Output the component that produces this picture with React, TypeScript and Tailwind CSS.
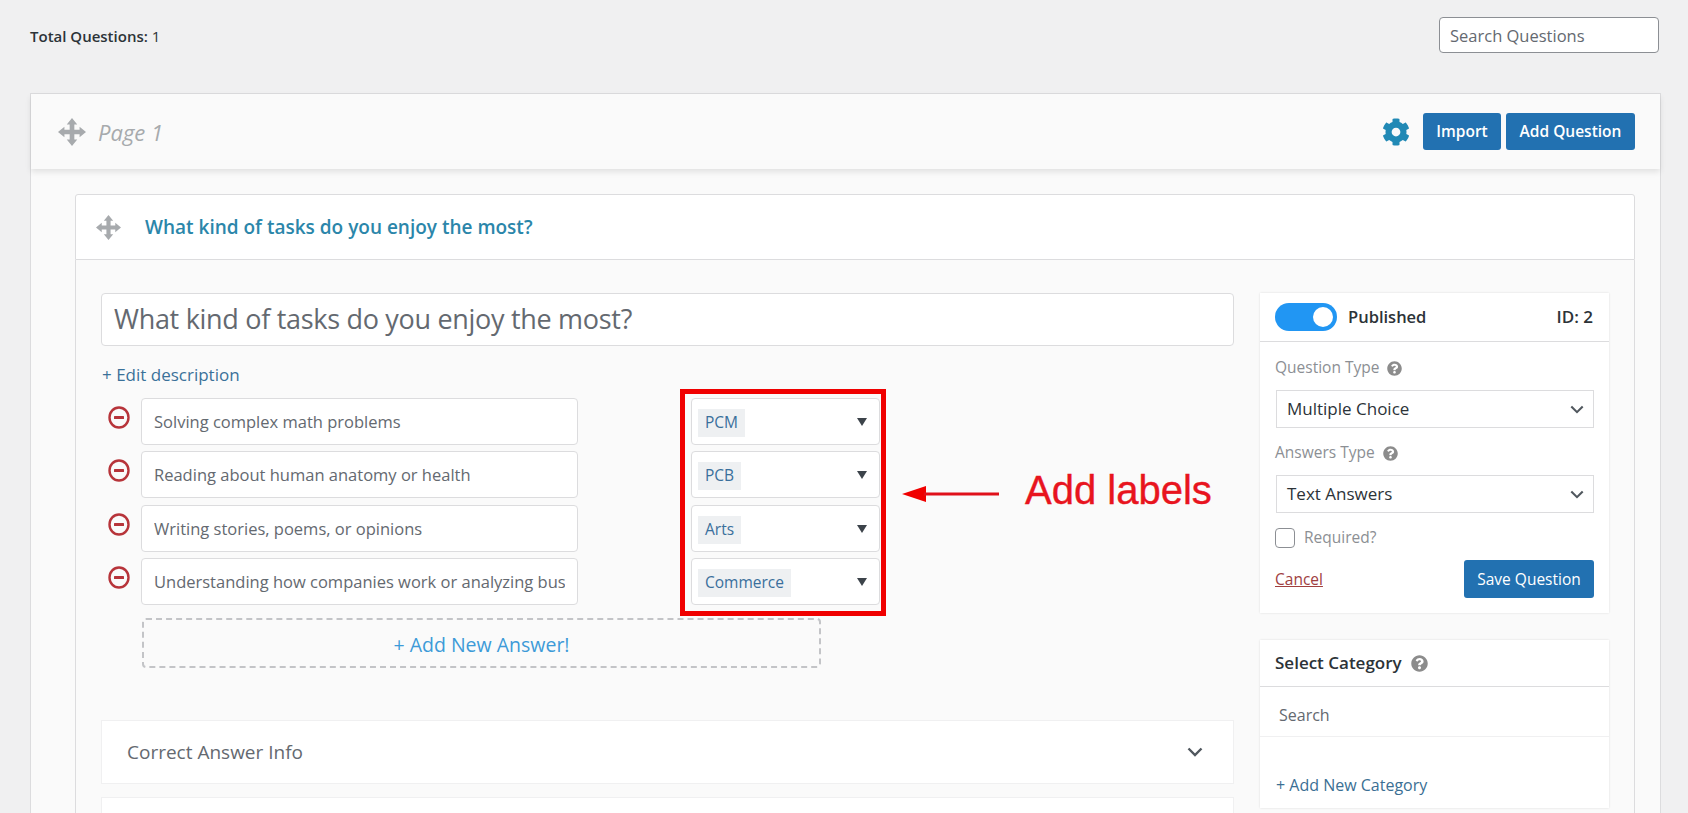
import React from "react";
import { FaCog, FaQuestionCircle } from "react-icons/fa";

function Move({ className }: { className: string }) {
  return (
    <svg viewBox="0 0 24 24" className={className} fill="#a7aaad">
      <path d="M12 0l4.5 5.5H14V10h4.5V7.5L24 12l-5.5 4.5V14H14v4.5h2.5L12 24l-4.5-5.5H10V14H5.5v2.5L0 12l5.5-4.5V10H10V5.5H7.5z" />
    </svg>
  );
}

function Minus() {
  return (
    <svg viewBox="0 0 22 23" className="w-[22px] h-[23px] shrink-0" fill="none">
      <ellipse cx="11" cy="11.5" rx="9.5" ry="10" stroke="#b7343a" strokeWidth="2.4" />
      <rect x="6" y="10" width="10" height="3" rx="0.5" fill="#b7343a" />
    </svg>
  );
}

function Chevron({ className }: { className: string }) {
  return (
    <svg viewBox="0 0 16 10" className={className} fill="none">
      <path d="M1.5 1.5L8 8l6.5-6.5" stroke="#50575e" strokeWidth="2.4" />
    </svg>
  );
}

function AnswerRow({ text, tag, extra }: { text: string; tag: string; extra: string }) {
  return (
    <div className={`flex items-start pl-[7px] ${extra}`}>
      <div className="mt-[8px]">
        <Minus />
      </div>
      <div className="ml-[11px] w-[437px] h-[47px] bg-white border border-[#dcdcde] rounded-[4px] pl-[12px] pr-[12px] flex items-center">
        <div className="overflow-hidden whitespace-nowrap text-[#646970] text-[16.5px] leading-[26px] pt-[1px]">{text}</div>
      </div>
      <div className="ml-[113px] w-[189px] h-[47px] bg-white border border-[#dcdcde] rounded-[4px] pl-[6px] pr-[12px] flex items-center justify-between">
        <span className="mt-[2px] bg-[#eef0f2] text-[#3a6f9c] text-[15.5px] h-[28px] px-[7px] flex items-center">{tag}</span>
        <svg viewBox="0 0 10 8" className="w-[10px] h-[8px]">
          <polygon points="0,0 10,0 5,8" fill="#3c434a" />
        </svg>
      </div>
    </div>
  );
}

function SelectBox({ text }: { text: string }) {
  return (
    <div className="ml-px w-[318px] h-[38px] bg-white border border-[#dcdcde] pl-[10px] pr-[9px] flex items-center justify-between">
      <span className="text-[#2c3338] text-[17px]">{text}</span>
      <Chevron className="w-[14px] h-[9px]" />
    </div>
  );
}

export default function App() {
  return (
    <div className="h-[813px] overflow-hidden bg-[#f0f0f1] pl-[30px] font-['Open_Sans',sans-serif]">
      <div className="w-[1629px] h-[93px] pt-[17px] flex justify-between items-start">
        <div className="text-[15px] text-[#2c3338] mt-[8px]">
          <span className="font-semibold">Total Questions:</span> 1
        </div>
        <div className="w-[220px] h-[36px] bg-white border border-[#8c8f94] rounded-[4px] pl-[10px] pt-[3px] flex items-center text-[#646970] text-[16.5px]">
          Search Questions
        </div>
      </div>

      <div className="w-[1631px] h-[800px] bg-[#fafafa] border border-[#dcdcde]">
        <div className="h-[75px] bg-[#fafafa] shadow-[0_3px_6px_rgba(0,0,0,0.1)] flex items-center pl-[27px] pr-[25px]">
          <Move className="w-[28px] h-[28px]" />
          <span className="ml-[12px] pt-[2px] text-[22px] italic text-[#a7aaad]">Page 1</span>
          <FaCog className="ml-auto w-[28px] h-[28px] text-[#2189b5]" />
          <div className="ml-[13px] w-[78px] h-[37px] rounded-[3px] bg-[#2271b1] text-white text-[15.5px] font-semibold flex items-center justify-center">
            Import
          </div>
          <div className="ml-[5px] w-[129px] h-[37px] rounded-[3px] bg-[#2271b1] text-white text-[15.5px] font-semibold flex items-center justify-center">
            Add Question
          </div>
        </div>

        <div className="ml-[44px] mt-[25px] w-[1560px] h-[66px] bg-white border border-[#dcdcde] rounded-t-[3px] flex items-center pl-[20px]">
          <Move className="w-[25px] h-[25px]" />
          <span className="ml-[24px] pt-[1px] text-[#2b86aa] text-[19px] font-semibold">What kind of tasks do you enjoy the most?</span>
        </div>

        <div className="ml-[44px] w-[1560px] h-[600px] border-x border-[#dcdcde] bg-[#fafafa] pl-[25px] pt-[33px] flex gap-[26px]">
          <div className="w-[1133px]">
            <div className="h-[53px] bg-white border border-[#dcdcde] rounded-[4px] pl-[12px] flex items-center text-[#646970] text-[27px] tracking-[-0.3px]">
              What kind of tasks do you enjoy the most?
            </div>
            <div className="mt-[17px] h-[24px] pl-[1px] flex items-center text-[#3a7199] text-[17px]">+ Edit description</div>

            <div className="relative mt-[11px]">
              <AnswerRow text="Solving complex math problems" tag="PCM" extra="" />
              <AnswerRow text="Reading about human anatomy or health" tag="PCB" extra="mt-[6px]" />
              <AnswerRow text="Writing stories, poems, or opinions" tag="Arts" extra="mt-[7px]" />
              <AnswerRow text="Understanding how companies work or analyzing business trends" tag="Commerce" extra="mt-[6px]" />

              <div className="absolute left-[579px] -top-[9px] w-[206px] h-[227px] border-[5px] border-[#f00000]" />
              <svg viewBox="0 0 97 16" className="absolute left-[801px] top-[88px] w-[97px] h-[16px]">
                <polygon points="0,8 24,0 24,16" fill="#f00000" />
                <rect x="22" y="6.5" width="75" height="3" fill="#e0101a" />
              </svg>
              <div className="absolute left-[924px] top-[72px] text-[40px] leading-[40px] text-[#e8141e] [-webkit-text-stroke:0.4px_#e8141e] font-['Liberation_Sans',sans-serif] whitespace-nowrap">
                Add labels
              </div>
            </div>

            <div className="ml-[41px] mt-[13px] w-[679px] h-[50px] border-2 border-dashed border-[#c3c4c7] rounded-[4px] pt-[4px] flex items-center justify-center text-[#3d9ad8] text-[19.5px]">
              + Add New Answer!
            </div>

            <div className="mt-[52px] h-[64px] bg-white border border-[#f0f0f1] flex items-center justify-between pl-[25px] pr-[30px]">
              <span className="text-[#646970] text-[19px]">Correct Answer Info</span>
              <Chevron className="w-[16px] h-[10px]" />
            </div>
            <div className="mt-[13px] h-[64px] bg-white border border-[#f0f0f1]" />
          </div>

          <div className="w-[349px]">
            <div className="h-[320px] bg-white shadow-[0_0_2px_rgba(0,0,0,0.12)]">
              <div className="h-[49px] border-b border-[#dcdcde] pl-[15px] pr-[16px] flex items-center">
                <div className="w-[62px] h-[28px] rounded-full bg-[#2196f3] flex items-center justify-end pr-[4px]">
                  <div className="w-[20px] h-[20px] rounded-full bg-white" />
                </div>
                <span className="ml-[11px] text-[16.5px] font-semibold text-[#2c3338]">Published</span>
                <span className="ml-auto text-[17px] font-semibold text-[#2c3338]">ID: 2</span>
              </div>
              <div className="pl-[15px] pr-[14px]">
                <div className="mt-[14px] h-[24px] flex items-center text-[#8c8f94] text-[15.5px]">
                  Question Type
                  <FaQuestionCircle className="ml-[8px] w-[15px] h-[15px] text-[#8c8c8c]" />
                </div>
                <div className="mt-[10px]">
                  <SelectBox text="Multiple Choice" />
                </div>
                <div className="mt-[13px] h-[24px] flex items-center text-[#8c8f94] text-[15.5px]">
                  Answers Type
                  <FaQuestionCircle className="ml-[8px] w-[15px] h-[15px] text-[#8c8c8c]" />
                </div>
                <div className="mt-[10px]">
                  <SelectBox text="Text Answers" />
                </div>
                <div className="mt-[13px] flex items-center">
                  <div className="w-[20px] h-[20px] bg-white border border-[#8c8f94] rounded-[4px]" />
                  <span className="ml-[9px] text-[#8c8f94] text-[15.5px]">Required?</span>
                </div>
                <div className="mt-[11px] flex items-center justify-between">
                  <span className="text-[#a0403f] text-[15.5px] underline">Cancel</span>
                  <div className="mr-[1px] w-[130px] h-[38px] bg-[#2271b1] rounded-[3px] text-white text-[15.5px] flex items-center justify-center">
                    Save Question
                  </div>
                </div>
              </div>
            </div>

            <div className="mt-[27px] h-[168px] bg-white shadow-[0_0_2px_rgba(0,0,0,0.12)]">
              <div className="h-[47px] border-b border-[#dcdcde] pl-[15px] flex items-center">
                <span className="text-[17px] font-semibold text-[#2c3338]">Select Category</span>
                <FaQuestionCircle className="ml-[9px] w-[17px] h-[17px] text-[#8c8c8c]" />
              </div>
              <div className="h-[50px] border-b border-[#f0f0f1] pl-[19px] pt-[6px] flex items-center text-[#646970] text-[16px]">Search</div>
              <div className="mt-[36px] pl-[16px] text-[#3b6f94] text-[16px]">+ Add New Category</div>
            </div>
          </div>
        </div>
      </div>
    </div>
  );
}
